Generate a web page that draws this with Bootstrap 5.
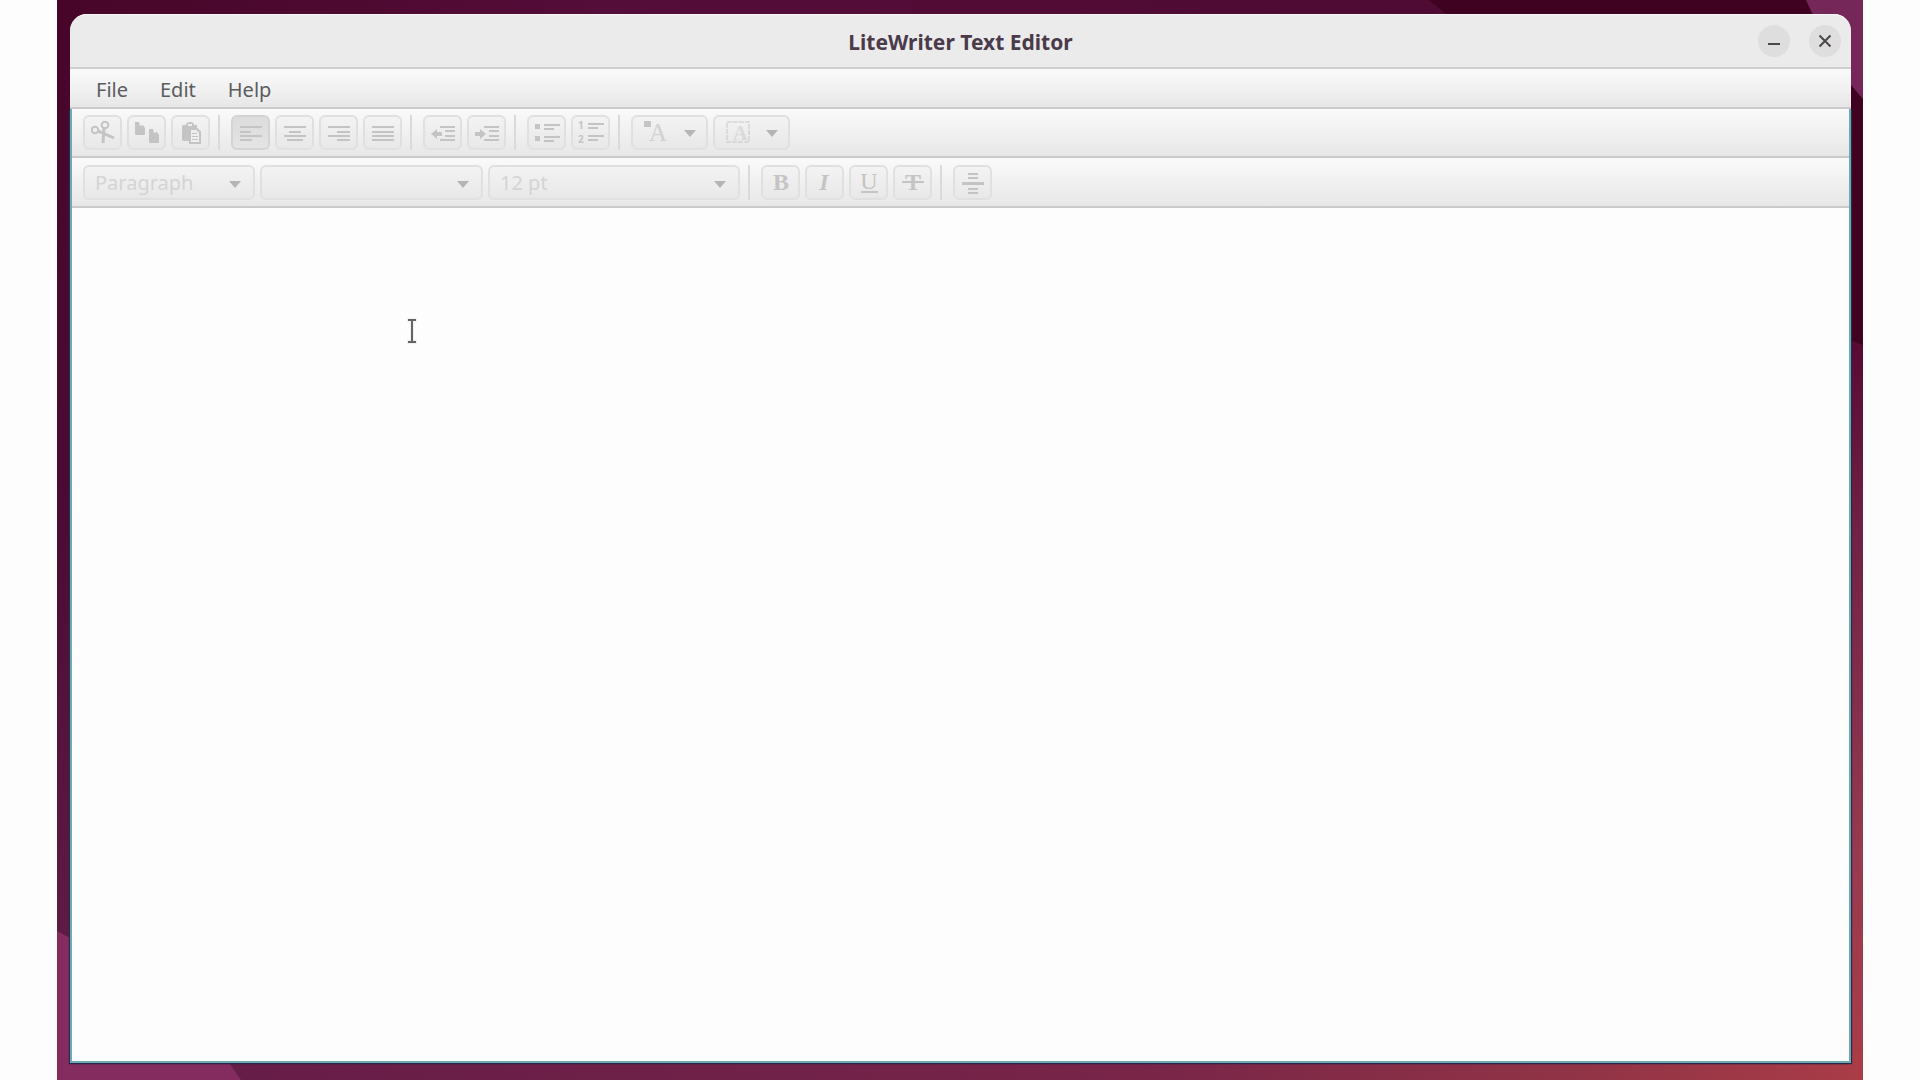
<!DOCTYPE html>
<html lang="en">
<head>
<meta charset="utf-8">
<meta name="viewport" content="width=device-width, initial-scale=1">
<title>LiteWriter Text Editor</title>
<link href="https://cdn.jsdelivr.net/npm/bootstrap@5.3.0/dist/css/bootstrap.min.css" rel="stylesheet">
<style>
body { background: #fdfdfd; font-family: "Noto Sans", "Open Sans", sans-serif; font-size: 20px; line-height: 24px; }
.desktop { margin: 0 57px; padding: 14px 12px 17px 13px; }
.wallpaper { z-index: 0; }
.app-window { z-index: 1; border-radius: 17px 17px 0 0; }
.titlebar { height: 55px; background: #ebebeb; border-bottom: 2px solid #cfcfcf; border-radius: 17px 17px 0 0; padding: 0 10px; box-shadow: inset 0 1px #f8f8f8; }
.titlebar h1 { font-size: 21px; line-height: 24px; color: #4a3a4a; padding-top: 2px; }
.side-slot { width: 84px; }
.win-btn { width: 32px; height: 32px; background: #dedede; color: #4d464d; }
.win-btns { gap: 19px; }
.menubar, .toolbar { background: linear-gradient(#fafafa, #e7e7e7); border-bottom: 2px solid #cacaca; }
.menubar { height: 40px; padding: 0 10px; }
.menubar a { color: #5c5c60; padding: 2px 16px 0; line-height: 38px; }
.window-body { border: 2px solid #6fa9b8; border-top: 0; box-shadow: 1px 1px 1px #2b2948, -1px 1px 1px #2b2948; }
.toolbar { gap: 5px; padding: 6px 11px; }
.format-bar { padding: 7px 11px 6px; }
.tool { width: 39px; height: 35px; border: 2px solid #e0e0e0; border-radius: 6px; background: linear-gradient(#f3f3f3, #e8e8e8); color: #c4c4c4; }
.tool.active { background: linear-gradient(#dcdcdc, #e4e4e4); border-color: #d4d4d4; }
.tool svg, .combo svg { display: block; fill: none; stroke: currentColor; stroke-width: 2; }
.tool svg text { fill: currentColor; stroke: none; }
.tool.wide { width: 77px; gap: 14px; }
.split { width: 2px; height: 35px; background: #dadada; margin: 0 6px 0 3px; }
.combo select { height: 35px; width: 100%; border: 2px solid #e0e0e0; border-radius: 6px; background: linear-gradient(#f3f3f3, #e8e8e8); color: #d4d4d4; padding: 0 10px; appearance: none; opacity: 1; }
.combo svg { right: 13px; top: 15px; color: #b5b5b5; pointer-events: none; }
.combo-style { width: 172px; }
.combo-font { width: 223px; }
.combo-size { width: 252px; }
.editor { background: #fdfdfd; resize: none; outline: 0; padding: 10px; }
.pointer { left: 335px; top: 303px; }
</style>
<script src="https://cdn.jsdelivr.net/npm/bootstrap@5.3.0/dist/js/bootstrap.bundle.min.js"></script>
</head>
<body>
<div class="desktop position-relative vh-100 d-flex">
  <svg class="wallpaper position-absolute top-0 start-0 w-100 h-100" viewBox="0 0 1806 1080" preserveAspectRatio="none" aria-hidden="true">
    <defs>
      <linearGradient id="leftShade" x1="0" y1="0" x2="0" y2="1"><stop offset="0" stop-color="#470629"/><stop offset=".45" stop-color="#4a0a33"/><stop offset="1" stop-color="#64204a"/></linearGradient>
      <linearGradient id="topShade"><stop offset="0" stop-color="#470629"/><stop offset=".3" stop-color="#540c38"/><stop offset="1" stop-color="#4c0a30"/></linearGradient>
      <linearGradient id="rightShade" x1="0" y1="0" x2="0" y2="1"><stop offset="0" stop-color="#560a34"/><stop offset=".25" stop-color="#6f2144"/><stop offset=".7" stop-color="#983a50"/><stop offset="1" stop-color="#a93c47"/></linearGradient>
      <linearGradient id="bottomShade"><stop offset="0" stop-color="#621b48"/><stop offset=".6" stop-color="#782548"/><stop offset=".85" stop-color="#923446"/><stop offset="1" stop-color="#a93c47"/></linearGradient>
    </defs>
    <path fill="url(#leftShade)" d="M0 0H900V1080H0z"/>
    <path fill="url(#topShade)" d="M0 0H1806V40H0z"/>
    <path fill="url(#rightShade)" d="M1780 340H1806V1080H1780z"/>
    <path fill="#3f0321" d="M1372 0H1806V345L1780 335V40H1420z"/>
    <path fill="#75275a" d="M1749 0H1806V99L1794 85L1780 50L1755 13z"/>
    <path fill="url(#bottomShade)" d="M0 1050H1806V1080H0z"/>
    <path fill="#842b60" d="M0 931L13 938V1060H170L184 1080H0z"/>
  </svg>

  <main class="app-window position-relative flex-grow-1 d-flex flex-column">
    <header class="titlebar d-flex align-items-center justify-content-between">
      <span class="side-slot"></span>
      <h1 class="fw-bold mb-0">LiteWriter Text Editor</h1>
      <div class="win-btns side-slot d-flex justify-content-end">
        <button type="button" class="win-btn btn rounded-circle p-0 border-0 flex-shrink-0" aria-label="Minimize"><svg class="d-block" width="32" height="32" fill="none" stroke="currentColor" stroke-width="2"><path d="M10 19H22"/></svg></button>
        <button type="button" class="win-btn btn rounded-circle p-0 border-0 flex-shrink-0" aria-label="Close"><svg class="d-block" width="32" height="32" fill="none" stroke="currentColor" stroke-width="2"><path d="M10.500 10.500L21.500 21.500M21.500 10.500L10.500 21.500"/></svg></button>
      </div>
    </header>
    <nav class="menubar d-flex" aria-label="Menu bar">
      <a href="#" class="text-decoration-none">File</a>
      <a href="#" class="text-decoration-none">Edit</a>
      <a href="#" class="text-decoration-none">Help</a>
    </nav>

    <div class="window-body flex-grow-1 d-flex flex-column">
      <div class="toolbar d-flex" role="toolbar" aria-label="Editing">
        <button type="button" class="tool d-flex align-items-center justify-content-center p-0" aria-label="Cut"><svg width="24" height="24"><circle cx="4" cy="9" r="3.300"/><circle cx="14" cy="4" r="3.300"/><path stroke-width="3" d="M7 10L23 17M13 7L12 22"/></svg></button>
        <button type="button" class="tool d-flex align-items-center justify-content-center p-0" aria-label="Copy"><svg width="26" height="24"><path fill="currentColor" stroke="none" d="M1 1H5L6 5L9 4L11 7V13Q11 14 10 14H2Q1 14 1 13zM15 8H19L20 12L23 11L25 14V21Q25 22 24 22H16Q15 22 15 21z"/></svg></button>
        <button type="button" class="tool d-flex align-items-center justify-content-center p-0" aria-label="Paste"><svg width="20" height="24"><path fill="currentColor" stroke="none" d="M2 4H5Q5 1 9 1Q13 1 13 4H16V9H8V20H3Q1 20 1 18V6Q1 4 2 4z"/><path stroke="#eee" d="M7 4H11"/><path fill="#eee" d="M9 8H16L19 11V22H9z"/><path stroke-width="1" d="M11 12.500H16M11 15.500H17M11 18.500H17"/></svg></button>
        <span class="split"></span>
        <button type="button" class="tool active d-flex align-items-center justify-content-center p-0" aria-label="Align left" aria-pressed="true"><svg width="22" height="18"><path d="M0 3H22M0 8H11M0 12H22M0 16H12"/></svg></button>
        <button type="button" class="tool d-flex align-items-center justify-content-center p-0" aria-label="Align center"><svg width="22" height="18"><path d="M0 3H22M5 8H17M0 12H22M3 16H19"/></svg></button>
        <button type="button" class="tool d-flex align-items-center justify-content-center p-0" aria-label="Align right"><svg width="22" height="18"><path d="M0 3H22M9 8H22M0 12H22M9 16H22"/></svg></button>
        <button type="button" class="tool d-flex align-items-center justify-content-center p-0" aria-label="Justify"><svg width="22" height="18"><path d="M0 3H22M0 8H22M0 12H22M0 16H22"/></svg></button>
        <span class="split"></span>
        <button type="button" class="tool d-flex align-items-center justify-content-center p-0" aria-label="Outdent"><svg width="24" height="18"><path fill="currentColor" stroke="none" d="M0 10L6 5V8H11V12H6V15z"/><path d="M9 3H24M14 7H24M14 12H24M9 16H24"/></svg></button>
        <button type="button" class="tool d-flex align-items-center justify-content-center p-0" aria-label="Indent"><svg width="24" height="18"><path fill="currentColor" stroke="none" d="M11 10L5 5V8H0V12H5V15z"/><path d="M9 3H24M14 7H24M14 12H24M9 16H24"/></svg></button>
        <span class="split"></span>
        <button type="button" class="tool d-flex align-items-center justify-content-center p-0" aria-label="Bulleted list"><svg width="26" height="22"><path fill="currentColor" stroke="none" d="M1 2H6V7H1zM1 14H6V19H1z"/><path d="M10 3H26M10 7H20M10 15H26M10 19H20"/></svg></button>
        <button type="button" class="tool d-flex align-items-center justify-content-center p-0" aria-label="Numbered list"><svg width="26" height="31"><text x="0" y="12" font-size="10" font-weight="bold">1</text><text x="0" y="26" font-size="10" font-weight="bold">2</text><path d="M10 7H26M10 11H20M10 19H26M10 23H20"/></svg></button>
        <span class="split"></span>
        <button type="button" class="tool wide d-flex align-items-center justify-content-center p-0" aria-label="Text color"><svg width="26" height="31"><path fill="currentColor" stroke="none" d="M1 4H8V10H1z"/><text x="6" y="24" font-size="25" font-family="Liberation Serif" opacity=".65">A</text></svg><svg width="14" height="8"><path fill="#b5b5b5" stroke="none" d="M1 1H13L7 8z"/></svg></button>
        <button type="button" class="tool wide d-flex align-items-center justify-content-center p-0" aria-label="Highlight color"><svg width="26" height="31"><g opacity=".45"><path stroke-width="2" stroke-dasharray="5 1" d="M2 5H24V25H2z"/><text x="8" y="23" font-size="20" font-weight="bold" font-family="Liberation Serif">A</text></g></svg><svg width="14" height="8"><path fill="#b5b5b5" stroke="none" d="M1 1H13L7 8z"/></svg></button>
      </div>

      <div class="toolbar format-bar d-flex" role="toolbar" aria-label="Formatting">
        <div class="combo combo-style position-relative"><select disabled aria-label="Paragraph style"><option>Paragraph</option></select><svg class="position-absolute" width="14" height="8"><path fill="currentColor" stroke="none" d="M1 1H13L7 8z"/></svg></div>
        <div class="combo combo-font position-relative"><select disabled aria-label="Font family"><option></option></select><svg class="position-absolute" width="14" height="8"><path fill="currentColor" stroke="none" d="M1 1H13L7 8z"/></svg></div>
        <div class="combo combo-size position-relative"><select disabled aria-label="Font size"><option>12 pt</option></select><svg class="position-absolute" width="14" height="8"><path fill="currentColor" stroke="none" d="M1 1H13L7 8z"/></svg></div>
        <span class="split"></span>
        <button type="button" class="tool d-flex align-items-center justify-content-center p-0" aria-label="Bold"><svg width="26" height="31"><text x="13" y="23" text-anchor="middle" font-size="24" font-weight="bold" font-family="Liberation Serif">B</text></svg></button>
        <button type="button" class="tool d-flex align-items-center justify-content-center p-0" aria-label="Italic"><svg width="26" height="31"><text x="12" y="23" text-anchor="middle" font-size="24" font-style="italic" font-weight="bold" font-family="Liberation Serif">I</text></svg></button>
        <button type="button" class="tool d-flex align-items-center justify-content-center p-0" aria-label="Underline"><svg width="26" height="31"><text x="13" y="22" text-anchor="middle" font-size="24" font-family="Liberation Serif" stroke="currentColor">U</text><path d="M5 25H22"/></svg></button>
        <button type="button" class="tool d-flex align-items-center justify-content-center p-0" aria-label="Strikethrough"><svg width="26" height="31"><text x="13" y="23" text-anchor="middle" font-size="24" font-weight="bold" font-family="Liberation Serif">T</text><path d="M2 15H24"/></svg></button>
        <span class="split"></span>
        <button type="button" class="tool d-flex align-items-center justify-content-center p-0" aria-label="Insert horizontal rule"><svg width="22" height="22"><path d="M6 2H16M6 6H16M6 17H16M6 21H16"/><path stroke-width="3" d="M0 11.500H22"/></svg></button>
      </div>
      <textarea class="editor flex-grow-1 w-100 border-0" aria-label="Document" spellcheck="false"></textarea>
    </div>
    <svg class="pointer position-absolute" width="14" height="28" fill="none" aria-hidden="true"><path stroke="#f0f0f0" stroke-width="4" d="M2 3H12M7 3V25M2 25H12"/><path stroke="#646464" stroke-width="2" d="M3 3H11M7 3V25M3 25H11"/></svg>
  </main>
</div>
</body>
</html>
